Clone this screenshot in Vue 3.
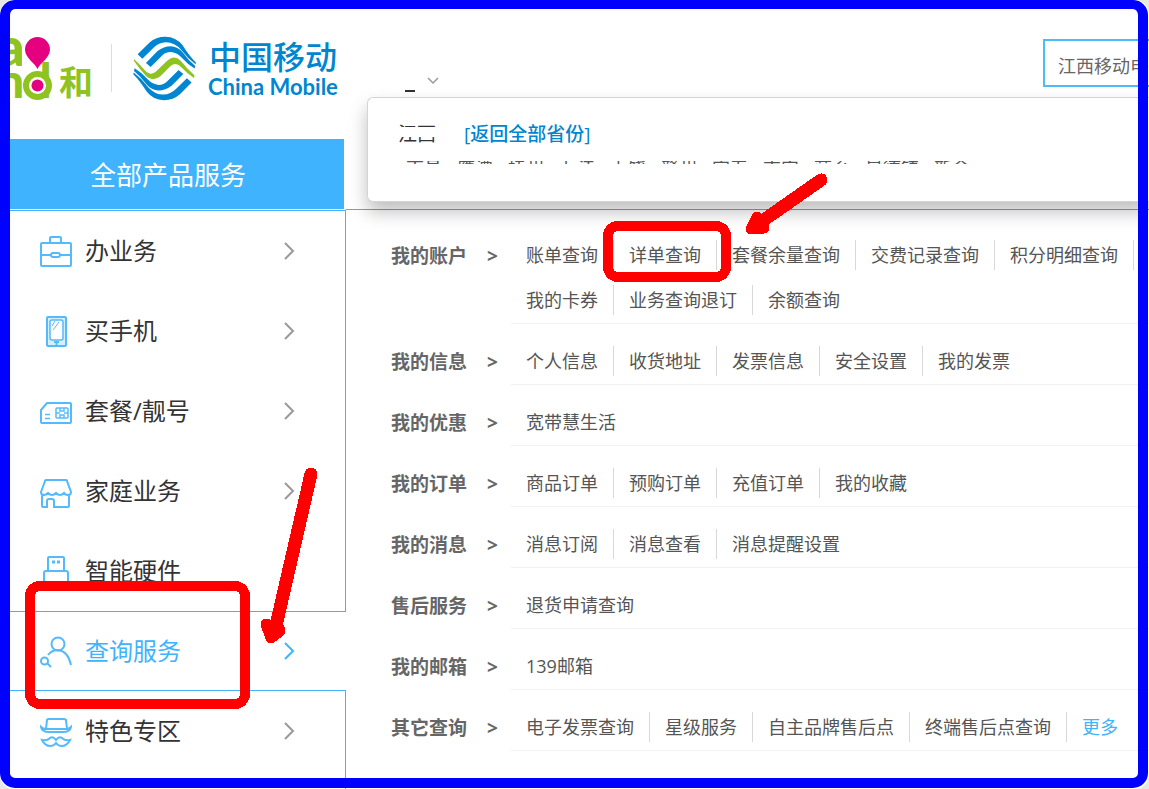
<script setup>
const menu = [
  { id: 'case', label: '办业务' },
  { id: 'phone', label: '买手机' },
  { id: 'sim', label: '套餐/靓号' },
  { id: 'shop', label: '家庭业务' },
  { id: 'usb', label: '智能硬件' },
  { id: 'user', label: '查询服务', active: true },
  { id: 'hat', label: '特色专区' }
]

const groups = [
  { title: '我的账户', links: ['账单查询', '详单查询', '套餐余量查询', '交费记录查询', '积分明细查询', '我的卡券', '业务查询退订', '余额查询'] },
  { title: '我的信息', links: ['个人信息', '收货地址', '发票信息', '安全设置', '我的发票'] },
  { title: '我的优惠', links: ['宽带慧生活'] },
  { title: '我的订单', links: ['商品订单', '预购订单', '充值订单', '我的收藏'] },
  { title: '我的消息', links: ['消息订阅', '消息查看', '消息提醒设置'] },
  { title: '售后服务', links: ['退货申请查询'] },
  { title: '我的邮箱', links: ['139邮箱'] },
  { title: '其它查询', links: ['电子发票查询', '星级服务', '自主品牌售后点', '终端售后点查询', '更多'] }
]

const cities = ['南昌', '鹰潭', '抚州', '九江', '上饶', '赣州', '宜春', '吉安', '萍乡', '景德镇', '新余']
</script>

<template>
  <div class="page">
    <header class="header">
      <svg class="logo" width="340" height="80" viewBox="10 30 340 80" role="img" aria-label="和 中国移动 China Mobile">
        <text class="brand" x="-3" y="66" font-size="54">a</text>
        <text class="brand" x="-3" y="98" font-size="48">nd</text>
        <circle cx="37.500" cy="85.500" r="14.500" fill="#8fc31f" />
        <circle cx="37.500" cy="85.500" r="8.500" fill="#fff" />
        <circle cx="37.500" cy="85.500" r="6" fill="#e4007f" />
        <path d="M37.500 69C35 63 25 58 25 49.500a12.500 12.500 0 0 1 25 0C50 58 40 63 37.500 69z" fill="#e4007f" stroke="#fff" stroke-width="1" paint-order="stroke" />
        <text class="he" x="59" y="95" font-size="34">和</text>
        <path d="M111.500 44v48" stroke="#dcdcdc" />
        <g transform="translate(120 20) scale(0.333)">
          <g fill="#0086d1">
            <path d="M53 103L88 68Q108 50 136 50Q168 50 188 76Q208 108 228 128L227 133Q204 116 184 90Q164 67 138 67Q116 68 100 84L67 116Z" />
            <path d="M78 129L112 94Q132 79 152 79Q174 80 188 97Q206 122 226 138L224 146Q204 134 184 112Q170 97 152 96Q136 96 126 107L92 141Z" />
          </g>
          <g fill="#0086d1" transform="rotate(180 134 145.500)">
            <path d="M53 103L88 68Q108 50 136 50Q168 50 188 76Q208 108 228 128L227 133Q204 116 184 90Q164 67 138 67Q116 68 100 84L67 116Z" />
            <path d="M78 129L112 94Q132 79 152 79Q174 80 188 97Q206 122 226 138L224 146Q204 134 184 112Q170 97 152 96Q136 96 126 107L92 141Z" />
          </g>
          <path d="M42 117Q58 132 74 150Q92 170 108 155L140 124Q162 102 182 122Q202 146 224 167L222 174Q204 163 184 142Q168 124 152 138L122 168Q98 188 78 168Q58 146 42 123Z" fill="#8fc31f" stroke="#fff" stroke-width="6" paint-order="stroke" />
        </g>
        <text class="cn" x="209" y="69" font-size="32">中国移动</text>
        <text class="en" x="208" y="95" font-size="22">China Mobile</text>
      </svg>
      <button class="region" type="button" aria-label="选择省份">
        <span class="region-name"></span>
        <svg width="12" height="8" viewBox="0 0 12 8"><path d="M1 1l5 5 5-5" fill="none" stroke="#999" stroke-width="1.500" /></svg>
      </button>
      <input class="search" type="text" value="江西移动电子渠道" aria-label="搜索" />
    </header>

    <div class="popup">
      <div class="popup-head">
        <span class="province">江西</span>
        <a href="#" class="back">[返回全部省份]</a>
      </div>
      <div class="cities"><span v-for="c in cities" :key="c">{{ c }}</span></div>
    </div>

    <div class="body">
      <aside class="side">
        <h2 class="side-title">全部产品服务</h2>
        <ul class="menu">
          <li v-for="m in menu" :key="m.id">
            <a href="#" class="item" :class="{ active: m.active }">
              <svg class="icon" width="32" height="32" viewBox="0 0 32 32" fill="none" stroke="#55bafb" stroke-width="2">
                <g v-if="m.id === 'case'">
                  <path d="M10 7V2q0-1 1-1h9q1 0 1 1v5M1 8q0-1 1-1h28q1 0 1 1v21q0 1-1 1H2q-1 0-1-1zM1 19h10M20 19h11" />
                  <rect x="11" y="17" width="9" height="4" rx="2" />
                </g>
                <g v-else-if="m.id === 'phone'">
                  <rect x="7" y="1" width="19" height="29" rx="1" fill="#d6eefe" />
                  <rect x="10" y="4" width="13" height="20" rx="2" fill="#fff" stroke-width="1.500" />
                  <path d="M12 10l3-5M13 14l6-8" stroke-width="1" />
                  <path d="M14 26h5M16.500 26v4" />
                </g>
                <g v-else-if="m.id === 'sim'">
                  <path d="M1 14L7 7h23q1 0 1 1v18q0 1-1 1H2q-1 0-1-1z" />
                  <path d="M5 18.500h5M5 22.500h5" stroke-width="1.500" />
                  <rect x="16" y="12" width="12" height="10" rx="1" stroke-width="1.500" />
                  <path d="M16 17h4M24 17h4M20 12v3h4v-3M20 22v-3h4v3" stroke-width="1.500" />
                </g>
                <g v-else-if="m.id === 'shop'">
                  <path d="M1 16L5 5q0-1 1-1h20q1 0 1 1l4 11q0 3-3 3-3 0-4-2-2 2-4 2t-4-2q-2 2-4 2t-4-2q-2 2-4 2-3 0-3-3zM2 18v12q0 1 1 1h4v-6q0-2 2-2h3q2 0 2 2v6h14q1 0 1-1V18" />
                </g>
                <g v-else-if="m.id === 'usb'">
                  <path d="M8 15V2q0-1 1-1h14q1 0 1 1v13M4 31V17q0-2 2-2h20q2 0 2 2v14z" />
                  <path d="M12 6h3M17 6h3" stroke-width="3" />
                </g>
                <g v-else-if="m.id === 'user'">
                  <circle cx="18" cy="8" r="6.500" />
                  <path d="M8 19q4-5 10-5 10 1 13 15M7 27l4 4" />
                  <circle cx="4.500" cy="25" r="3.500" />
                </g>
                <g v-else>
                  <path d="M6 13L7 4q0-1 2-1h15q1 0 2 1l1 9M6 13h20M6 13q-3 0-5-2 1 5 8 5h14q7 0 8-5-2 2-5 2" />
                  <path d="M16 24q-3-4-6-2-3 3-8 2 3 6 8 6 4 0 6-3 2 3 6 3 5 0 8-6-5 1-8-2-3-2-6 2z" />
                </g>
              </svg>
              <span class="label">{{ m.label }}</span>
              <svg class="arrow" width="12" height="18" viewBox="0 0 12 18"><path d="M2 1l8 8-8 8" fill="none" stroke="currentColor" stroke-width="2" /></svg>
            </a>
          </li>
          <li class="rest"></li>
        </ul>
      </aside>

      <main class="main">
        <section v-for="g in groups" :key="g.title" class="row">
          <h3 class="row-title"><span>{{ g.title }}</span><span>&gt;</span></h3>
          <div class="links">
            <a v-for="l in g.links" :key="l" href="#" :class="{ more: l === '更多' }">{{ l }}</a>
          </div>
        </section>
      </main>
    </div>

    <svg class="marks" width="1149" height="789" viewBox="0 0 1149 789" aria-hidden="true" shape-rendering="crispEdges">
      <g fill="none" stroke="#f00" stroke-width="10">
        <rect x="30" y="586" width="215" height="118" rx="10" />
        <rect x="608" y="226" width="118" height="51" rx="10" />
      </g>
      <g stroke="#f00" stroke-width="12" stroke-linecap="round" fill="#f00">
        <path d="M311 474L275 630" stroke-width="13" />
        <path d="M266 624L279 628 280 631 271 638z" stroke-width="11" stroke-linejoin="round" />
        <path d="M821 180L758 224" stroke-width="13" />
        <path d="M757 217L764 228 762 228 751 229z" stroke-width="11" stroke-linejoin="round" />
      </g>
    </svg>
    <div class="frame" aria-hidden="true"></div>
  </div>
</template>

<style>
body { margin: 0; background: #e6e6e6; }
</style>

<style scoped>
.page {
  position: relative;
  box-sizing: border-box;
  min-height: 100vh;
  display: flex;
  flex-direction: column;
  overflow: hidden;
  background: #fff;
  border-radius: 14px;
  color: #555;
  font-family: "Open Sans", "Noto Sans CJK SC", sans-serif;
  font-weight: 400;
}
a { color: inherit; text-decoration: none; }
h2, h3, ul { margin: 0; padding: 0; font-weight: inherit; list-style: none; }

.header {
  display: flex;
  align-items: flex-start;
  box-sizing: border-box;
  height: 139px;
  padding: 30px 0 0 10px;
}
.logo { flex: none; }
.brand { fill: #8fc31f; font-family: Lato, sans-serif; font-weight: 900; }
.he { fill: #8fc31f; font-weight: 700; }
.cn { fill: #0086d1; font-weight: 500; }
.en { fill: #0086d1; font-family: Lato, sans-serif; font-weight: 700; }
.region {
  display: flex;
  align-items: flex-start;
  gap: 12px;
  margin: 47px 0 0 55px;
  padding: 0;
  border: 0;
  background: none;
}
.region-name {
  width: 10px;
  height: 2px;
  margin-top: 13px;
  background: #333;
}
.search {
  box-sizing: border-box;
  width: 106px;
  height: 48px;
  margin: 9px 0 0 auto;
  padding: 4px 0 0 13px;
  border: 2px solid #4dbbfa;
  border-right: 0;
  border-radius: 0;
  background: #fff;
  color: #666;
  font: inherit;
  font-size: 18px;
}

.popup {
  position: absolute;
  z-index: 2;
  top: 97px;
  left: 367px;
  right: 0;
  box-sizing: border-box;
  height: 105px;
  padding: 25px 0 0 30px;
  border: 1px solid #d4d4d4;
  border-right: 0;
  border-radius: 6px 0 0 6px;
  background: #fff;
  box-shadow: 0 10px 18px rgba(0, 0, 0, 0.25);
}
.popup-head {
  display: flex;
  gap: 28px;
  color: #333;
  font-size: 19px;
  line-height: 22px;
}
.province { position: relative; }
.province::after {
  content: "";
  position: absolute;
  top: 4px;
  left: 0;
  width: 100%;
  height: 10px;
  background: #fff;
}
.back { color: #0085d0; font-weight: 500; }
.cities {
  display: flex;
  gap: 15px;
  height: 3px;
  margin-top: 16px;
  padding-left: 8px;
  overflow: hidden;
  font-size: 18px;
  line-height: 14px;
}

.body { flex: 1; display: flex; }
.side {
  flex: none;
  display: flex;
  flex-direction: column;
  box-sizing: border-box;
  width: 346px;
  padding-left: 10px;
}
.side-title {
  height: 70px;
  margin-right: 2px;
  padding-left: 80px;
  background: #3fb3fd;
  color: #fff;
  font-size: 26px;
  line-height: 72px;
}
.menu {
  flex: 1;
  display: flex;
  flex-direction: column;
  margin-top: 1px;
  border-top: 1px solid #46b1f5;
}
.item {
  display: flex;
  align-items: center;
  box-sizing: border-box;
  height: 80px;
  padding: 0 50px 0 30px;
  border-right: 1px solid #46b1f5;
  color: #333;
  font-size: 24px;
}
.item.active {
  border: solid #46b1f5;
  border-width: 1px 0;
  color: #3fb3fd;
}
.active .arrow { color: #3fb3fd; margin-right: 1px; }
.icon { margin-top: 2px; }
.label { margin: 0 auto 0 13px; padding-bottom: 4px; }
.arrow { color: #999; }
.rest { flex: 1; border-right: 1px solid #46b1f5; }

.main {
  flex: 1;
  min-width: 0;
  margin-top: 70px;
  padding-top: 8px;
  border-top: 1px solid #46b1f5;
}
.row { display: flex; }
.row-title {
  flex: none;
  display: flex;
  gap: 20px;
  box-sizing: border-box;
  width: 165px;
  padding: 23px 0 0 45px;
  color: #666;
  font-size: 19px;
  font-weight: 700;
  line-height: 30px;
}
.links {
  flex: 1;
  display: flex;
  flex-wrap: wrap;
  row-gap: 15px;
  padding: 22px 0 8px;
  border-bottom: 1px solid #f2f2f2;
  font-size: 18px;
  line-height: 30px;
}
.links a { padding: 0 15px; border-right: 1px solid #d8d8d8; }
.links a:last-child { border-right: 0; }
.links .more { color: #3fb3fd; }

.marks { position: absolute; z-index: 3; top: 0; left: 0; }
.frame {
  position: absolute;
  z-index: 4;
  inset: 0 1px 1px 0;
  border: 10px solid #00f;
  border-top-width: 9px;
  border-radius: 15px;
  pointer-events: none;
}
</style>
